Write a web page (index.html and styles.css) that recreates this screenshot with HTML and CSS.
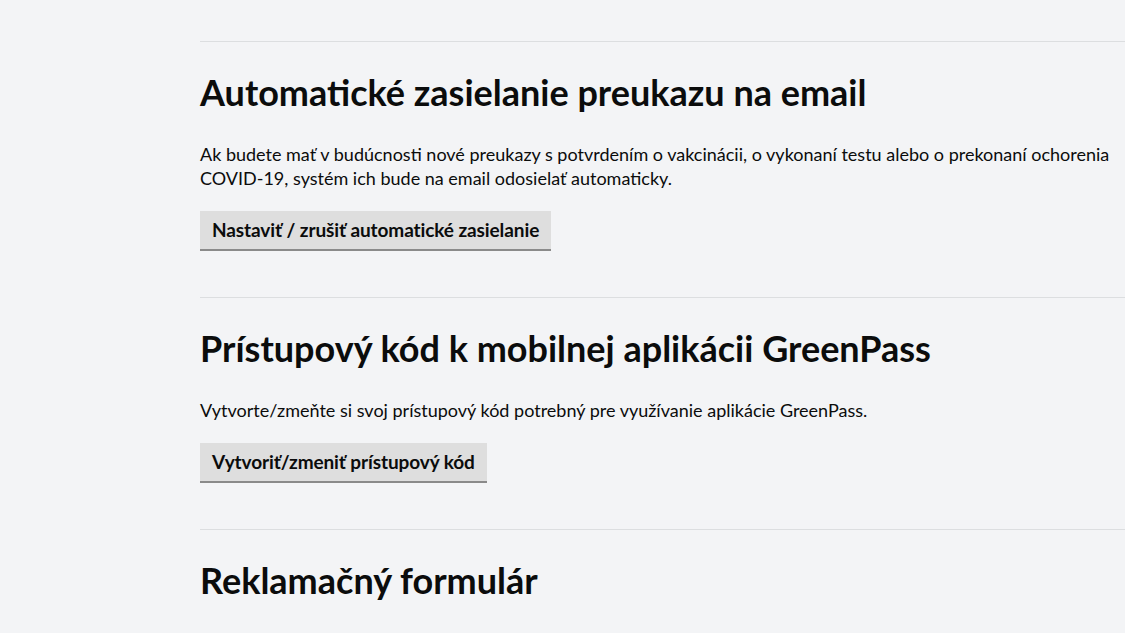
FILE: index.html
```html
<!doctype html>
<html lang="sk">
  <head>
    <meta charset="UTF-8" />
    <meta name="viewport" content="width=device-width, initial-scale=1.0" />
    <title>Preukazy</title>
    <link rel="stylesheet" href="styles.css">
  </head>

  <body>
    <div class="page">
      <section class="section">
        <h2 class="section-title">Automatické zasielanie preukazu na email</h2>
        <p class="section-text">Ak budete mať v budúcnosti nové preukazy s potvrdením o vakcinácii, o vykonaní testu alebo o prekonaní ochorenia COVID-19, systém ich bude na email odosielať automaticky.</p>
        <div class="button">Nastaviť / zrušiť automatické zasielanie</div>
      </section>

      <section class="section">
        <h2 class="section-title">Prístupový kód k mobilnej aplikácii GreenPass</h2>
        <p class="section-text">Vytvorte/zmeňte si svoj prístupový kód potrebný pre využívanie aplikácie GreenPass.</p>
        <div class="button">Vytvoriť/zmeniť prístupový kód</div>
      </section>

      <section class="section">
        <h2 class="section-title">Reklamačný formulár</h2>
      </section>
    </div>
  </body>
</html>
```

FILE: styles.css
```css
html,
body {
  width: 100%;
  height: 100%;
  overflow: hidden;
  padding: 0;
  margin: 0;
}

body {
  background-color: #f3f4f6;
  color: #0b0c0c;
  font-family: Lato, "Noto Sans", sans-serif;
}

.page {
  padding: 41px 0 0 200px;
}

.section {
  border-top: 1px solid #dcdee0;
  padding-bottom: 46px;
}

.section-title {
  margin: 0;
  padding-top: 28px;
  font-size: 36px;
  line-height: 44px;
  font-weight: 700;
}

.section-text {
  margin: 28px 0 0;
  max-width: 925px;
  font-size: 18px;
  line-height: 24px;
}

.button {
  display: inline-block;
  margin-top: 21px;
  padding: 0 12px;
  height: 38px;
  line-height: 38px;
  font-size: 19px;
  font-weight: 700;
  letter-spacing: -0.1px;
  background-color: #dedede;
  border-bottom: 2px solid #8a8a8a;
  user-select: none;
  cursor: pointer;
}
```
